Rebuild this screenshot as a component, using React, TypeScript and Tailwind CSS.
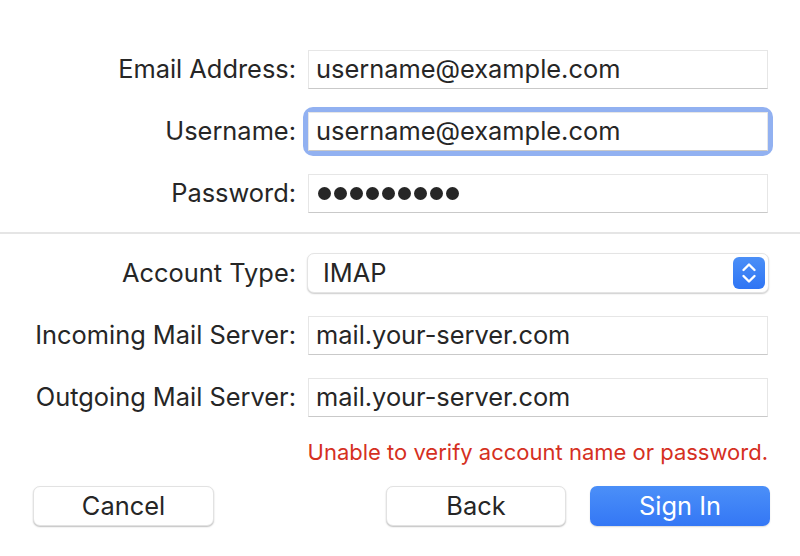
const font = { fontFamily: 'Inter, "Noto Sans", sans-serif' };

function Row({ label, children }: { label: string; children: React.ReactNode }) {
  return (
    <div className="flex items-center h-[40px]">
      <div className="w-[296px] text-right text-[25.4px] text-[#262626] whitespace-nowrap">{label}</div>
      <div className="ml-[12px] w-[460px]">{children}</div>
    </div>
  );
}

function Field({ value, focused }: { value: string; focused?: boolean }) {
  const box = (
    <div className="h-[39px] bg-white border border-[#e6e6e6] border-b-[#c9c9c9] flex items-center px-[7px] text-[25.4px] text-[#262626] whitespace-nowrap">
      {value}
    </div>
  );
  if (!focused) return box;
  return <div className="rounded-[5px] ring-[5px] ring-[#92b1f1]">{box}</div>;
}

export default function App() {
  return (
    <div className="w-[800px] h-[556px] bg-white overflow-hidden" style={font}>
      {/* account fields */}
      <div className="pt-[49px] flex flex-col gap-[22px]">
        <Row label="Email Address:">
          <Field value="username@example.com" />
        </Row>
        <Row label="Username:">
          <Field value="username@example.com" focused />
        </Row>
        <Row label="Password:">
          <div className="h-[39px] bg-white border border-[#e6e6e6] border-b-[#c9c9c9] flex items-center gap-[3px] pl-[9px]">
            {Array.from({ length: 9 }).map((_, i) => (
              <span key={i} className="w-[13px] h-[13px] rounded-full bg-[#262626]" />
            ))}
          </div>
        </Row>
      </div>

      <div className="mt-[19px] h-[2px] bg-[#e5e5e5]" />

      {/* server settings */}
      <div className="pt-[19px] flex flex-col gap-[22px]">
        <Row label="Account Type:">
          <div className="h-[40px] -ml-[1px] w-[462px] rounded-[7px] bg-white border border-[#e4e4e4] shadow-[0_1px_1.5px_rgba(0,0,0,0.2)] flex items-center justify-between pl-[15px] pr-[3px] text-[25.4px] text-[#262626]">
            <span>IMAP</span>
            <span className="w-[32px] h-[32px] rounded-[6px] bg-gradient-to-b from-[#4b8ff7] to-[#2f75f4] flex items-center justify-center">
              <svg width="16" height="22" viewBox="0 0 16 22" fill="none" stroke="white" strokeWidth="2.4" strokeLinecap="round" strokeLinejoin="round">
                <path d="M2.5 8 8 2.5 13.5 8" />
                <path d="M2.5 14 8 19.5 13.5 14" />
              </svg>
            </span>
          </div>
        </Row>
        <Row label="Incoming Mail Server:">
          <Field value="mail.your-server.com" />
        </Row>
        <Row label="Outgoing Mail Server:">
          <Field value="mail.your-server.com" />
        </Row>
      </div>

      <div className="mt-[21px] pr-[32px] text-right text-[22px] text-[#d5301f] leading-[28px] whitespace-nowrap">
        Unable to verify account name or password.
      </div>

      {/* buttons */}
      <div className="mt-[20px] flex items-center pl-[33px] pr-[30px] text-[25.4px]">
        <button className="w-[181px] h-[40px] rounded-[7px] bg-white border border-[#e2e2e2] shadow-[0_1px_1.5px_rgba(0,0,0,0.25)] text-[#262626]">
          Cancel
        </button>
        <div className="flex-1" />
        <button className="w-[180px] h-[40px] rounded-[7px] bg-white border border-[#e2e2e2] shadow-[0_1px_1.5px_rgba(0,0,0,0.25)] text-[#262626]">
          Back
        </button>
        <button className="ml-[24px] w-[180px] h-[40px] rounded-[7px] bg-gradient-to-b from-[#4b8ff8] to-[#3477f5] shadow-[0_1px_1.5px_rgba(0,0,0,0.15)] text-white">
          Sign In
        </button>
      </div>
    </div>
  );
}
